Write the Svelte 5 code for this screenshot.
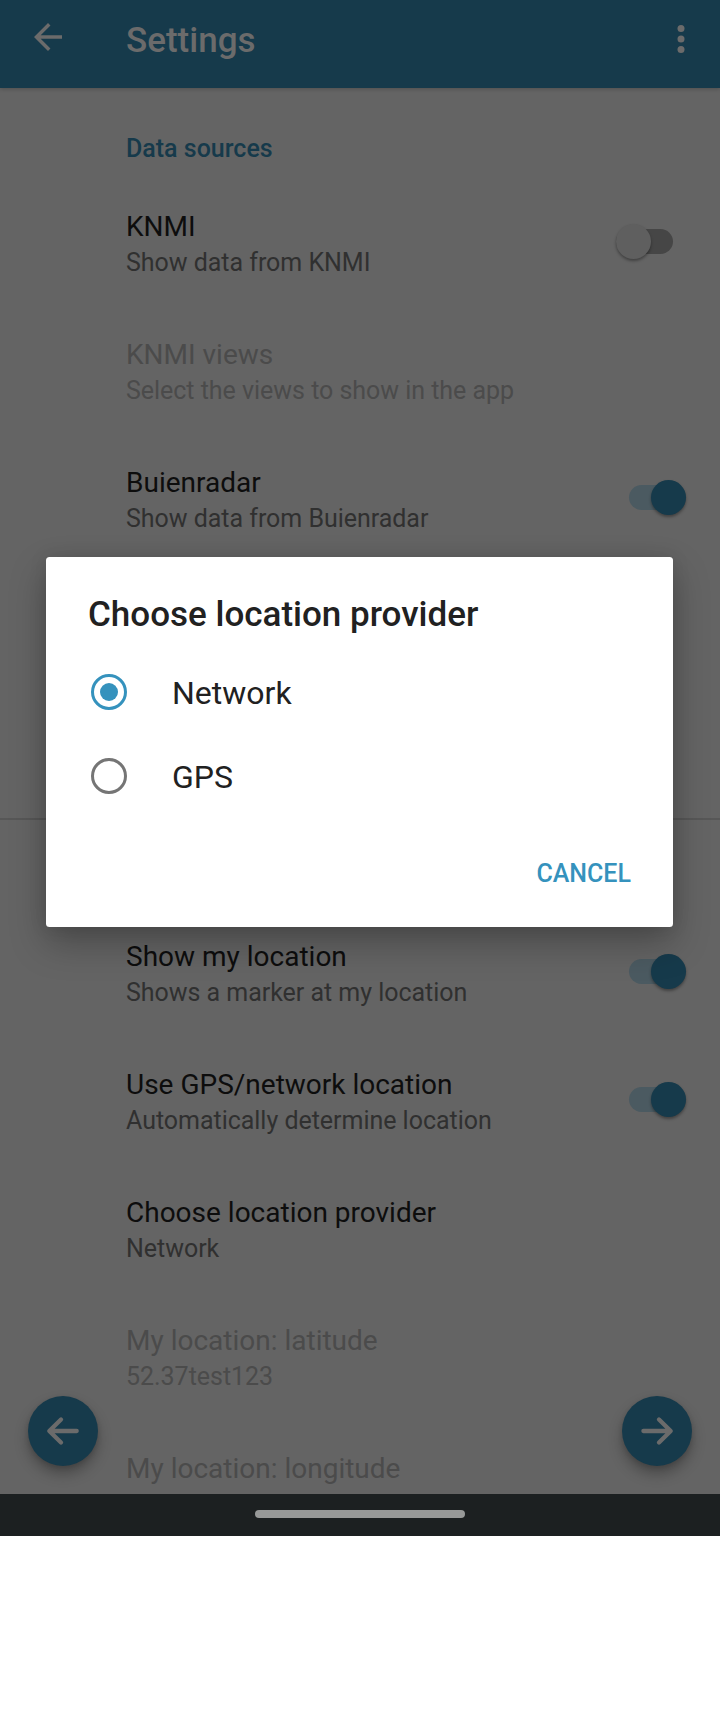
<script>
  const sources = [
    { title: 'KNMI', summary: 'Show data from KNMI', toggle: 'off' },
    { title: 'KNMI views', summary: 'Select the views to show in the app', disabled: true },
    { title: 'Buienradar', summary: 'Show data from Buienradar', toggle: 'on' }
  ];
  const location = [
    { title: 'Show my location', summary: 'Shows a marker at my location', toggle: 'on' },
    { title: 'Use GPS/network location', summary: 'Automatically determine location', toggle: 'on' },
    { title: 'Choose location provider', summary: 'Network' },
    { title: 'My location: latitude', summary: '52.37test123', disabled: true },
    { title: 'My location: longitude', summary: '', disabled: true }
  ];
  const providers = ['Network', 'GPS'];
  let selected = $state('Network');
</script>

{#snippet row(item)}
  <div class="row" class:disabled={item.disabled}>
    <div class="copy">
      <div class="title">{item.title}</div>
      <div class="summary">{item.summary}</div>
    </div>
    {#if item.toggle}
      <div class="switch {item.toggle}"><span class="thumb"></span></div>
    {/if}
  </div>
{/snippet}

<div class="screen">
  <header>
    <svg class="back" width="42" height="42" viewBox="0 0 24 24"><path fill="#6b6b6b" d="M20 11H7.83l5.59-5.59L12 4l-8 8 8 8 1.41-1.41L7.83 13H20v-2z" /></svg>
    <h1>Settings</h1>
    <svg class="more" width="42" height="42" viewBox="0 0 24 24" fill="#6b6b6b"><circle cx="12" cy="6" r="2" /><circle cx="12" cy="12" r="2" /><circle cx="12" cy="18" r="2" /></svg>
  </header>

  <main>
    <section class="first">
      <h2>Data sources</h2>
      {#each sources as item}{@render row(item)}{/each}
    </section>
    <section class="second">
      {#each location as item}{@render row(item)}{/each}
    </section>
  </main>

  <button class="fab prev" aria-label="Previous">
    <svg width="42" height="42" viewBox="0 0 42 42"><path d="M34.7 21H8M19 9.5 7.3 21 19 32.5" /></svg>
  </button>
  <button class="fab next" aria-label="Next">
    <svg width="42" height="42" viewBox="0 0 42 42"><path d="M7.4 21H34M23 9.5 34.7 21 23 32.5" /></svg>
  </button>

  <div class="dialog" role="dialog">
    <h3>Choose location provider</h3>
    <div class="options">
      {#each providers as name}
        <button class="option" class:checked={selected === name} onclick={() => (selected = name)}>
          <span class="radio"></span><span class="label">{name}</span>
        </button>
      {/each}
    </div>
    <div class="actions"><button>CANCEL</button></div>
  </div>

  <nav><span></span></nav>
</div>

<style>
  :global(body) { background: #fff; }
  .screen {
    position: relative;
    display: flex;
    flex-direction: column;
    width: 720px;
    height: 1536px;
    overflow: hidden;
    background: #646464;
    font-family: Roboto, sans-serif;
  }
  h1, h2, h3 { margin: 0; font-weight: 500; }
  button { border: 0; padding: 0; background: none; font-family: inherit; }
  svg { display: block; }
  header {
    display: flex;
    flex: none;
    align-items: flex-start;
    box-sizing: border-box;
    height: 88px;
    padding: 0 18px 0 27px;
    background: #163a4b;
    box-shadow: 0 1px 4px rgba(0, 0, 0, .22);
    z-index: 1;
  }
  .back { margin-top: 16px; }
  h1 { flex: 1; margin: 20px 0 0 57px; font-size: 35px; line-height: 41px; color: #6b6b6b; }
  .more { margin-top: 18px; }
  main { flex: 1; overflow: hidden; }
  .first { box-sizing: border-box; height: 732px; border-bottom: 2px solid #575757; }
  .second { padding-top: 88px; }
  h2 {
    box-sizing: border-box;
    height: 90px;
    padding: 43px 0 0 126px;
    font-size: 25px;
    line-height: 35px;
    color: #163a4b;
  }
  .row {
    display: flex;
    justify-content: space-between;
    align-items: center;
    box-sizing: border-box;
    height: 128px;
    padding: 0 34px 0 126px;
    color: #0d0d0d;
  }
  .copy { height: 68px; white-space: nowrap; }
  .title { font-size: 28px; line-height: 37px; }
  .summary { font-size: 25px; line-height: 35px; letter-spacing: -.03px; color: #303030; }
  .disabled, .disabled .summary { color: #4b4b4b; }
  .switch { display: flex; align-items: center; width: 57px; height: 25px; margin-bottom: 1px; border-radius: 13px; }
  .thumb { flex: none; width: 35px; height: 35px; border-radius: 50%; box-shadow: 0 2px 3px rgba(0, 0, 0, .35); }
  .on { justify-content: flex-end; background: #4b5a61; }
  .on .thumb { background: #163a4b; }
  .off { justify-content: flex-start; margin-right: 13px; background: #464646; }
  .off .thumb { background: #5f5f5f; }
  .fab {
    position: absolute;
    top: 1396px;
    display: grid;
    place-items: center;
    width: 70px;
    height: 70px;
    border-radius: 50%;
    background: #163a4b;
    box-shadow: 0 8px 14px rgba(0, 0, 0, .28), 0 2px 5px rgba(0, 0, 0, .12);
  }
  .fab path { fill: none; stroke: #6b6b6b; stroke-width: 4.3; stroke-linecap: round; stroke-linejoin: round; }
  .prev { left: 28px; }
  .next { left: 622px; }
  .dialog {
    position: absolute;
    z-index: 2;
    left: 46px;
    top: 557px;
    box-sizing: border-box;
    width: 627px;
    height: 370px;
    padding: 37px 42px 0;
    border-radius: 3.5px;
    background: #fff;
    color: #212121;
    box-shadow: 0 16px 36px rgba(0, 0, 0, .27), 0 0 18px rgba(0, 0, 0, .1);
  }
  h3 { font-size: 35px; line-height: 41px; }
  .options { margin-top: 15px; }
  .option { display: flex; align-items: center; width: 100%; height: 84px; gap: 45px; padding-left: 3px; font-size: 32px; color: #212121; }
  .label { padding-top: 2px; }
  .radio { display: grid; place-items: center; box-sizing: border-box; width: 36px; height: 36px; border: 3.5px solid #757575; border-radius: 50%; }
  .checked .radio { border-color: #3592bd; }
  .checked .radio::after { content: ''; width: 18px; height: 18px; border-radius: 50%; background: #3592bd; }
  .actions { display: flex; justify-content: flex-end; margin-top: 41px; }
  .actions button { font-size: 25px; line-height: 29px; font-weight: 500; color: #3592bd; }
  nav { display: flex; justify-content: center; align-items: flex-start; flex: none; box-sizing: border-box; height: 42px; padding-top: 16px; background: #1c2021; z-index: 1; }
  nav span { width: 210px; height: 8px; border-radius: 4px; background: #979998; }
</style>
